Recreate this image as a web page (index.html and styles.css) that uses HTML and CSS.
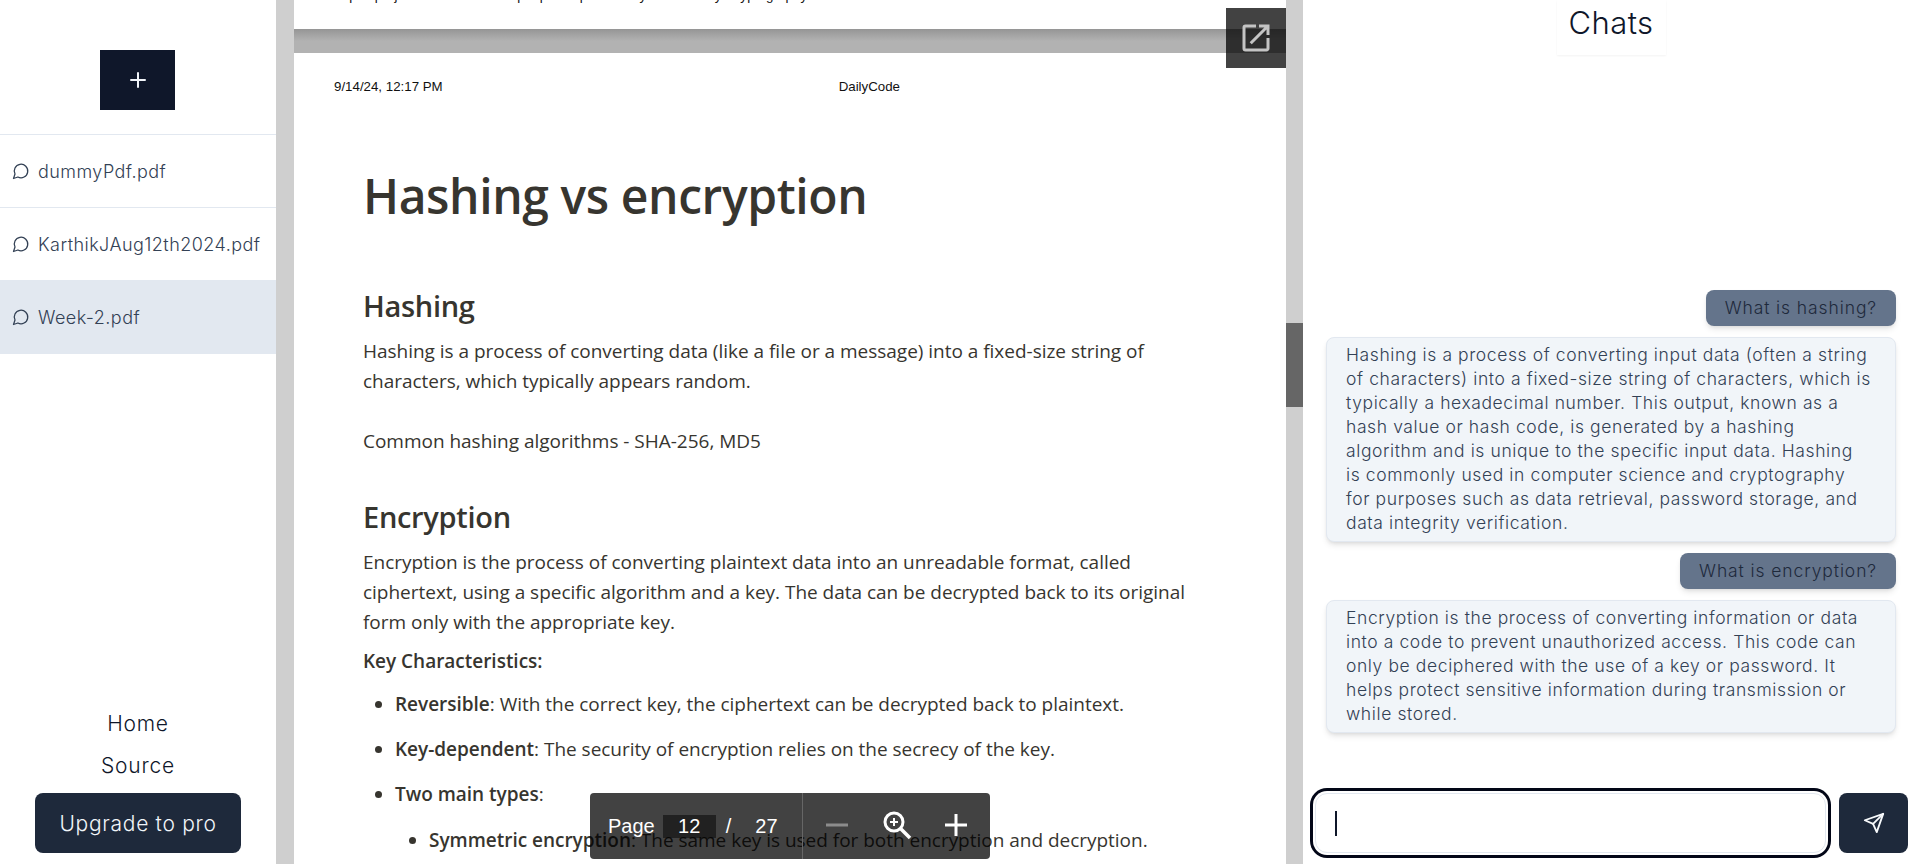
FILE: index.html
```html
<!DOCTYPE html>
<html lang="en">
<head>
    <meta charset="UTF-8">
    <meta name="viewport" content="width=device-width, initial-scale=1.0">
    <title>Chat with PDF</title>
    <link rel="stylesheet" href="styles.css">
</head>
<body>
    <div class="app">
        <aside class="sidebar">
            <div class="new-wrap">
                <button class="new-button">
                    <svg width="24" height="24" viewBox="0 0 24 24" fill="none" stroke="currentColor" stroke-width="2" stroke-linecap="round"><path d="M5 12h14"/><path d="M12 5v14"/></svg>
                </button>
            </div>
            <div class="file-list">
                <div class="file-item">
                    <svg class="file-icon" width="18" height="18" viewBox="0 0 24 24" fill="none" stroke="currentColor" stroke-width="1.7" stroke-linecap="round" stroke-linejoin="round"><path d="M7.9 20A9 9 0 1 0 4 16.1L2 22Z"/></svg>
                    <span>dummyPdf.pdf</span>
                </div>
                <div class="file-item">
                    <svg class="file-icon" width="18" height="18" viewBox="0 0 24 24" fill="none" stroke="currentColor" stroke-width="1.7" stroke-linecap="round" stroke-linejoin="round"><path d="M7.9 20A9 9 0 1 0 4 16.1L2 22Z"/></svg>
                    <span>KarthikJAug12th2024.pdf</span>
                </div>
                <div class="file-item active">
                    <svg class="file-icon" width="18" height="18" viewBox="0 0 24 24" fill="none" stroke="currentColor" stroke-width="1.7" stroke-linecap="round" stroke-linejoin="round"><path d="M7.9 20A9 9 0 1 0 4 16.1L2 22Z"/></svg>
                    <span>Week-2.pdf</span>
                </div>
            </div>
            <div class="side-footer">
                <a class="side-link">Home</a>
                <a class="side-link">Source</a>
                <button class="upgrade-button">Upgrade to pro</button>
            </div>
        </aside>

        <main class="viewer">
            <div class="pages">
                <div class="page-end">
                    <span>https://projects.100xdevs.com/pdf/public-private-keys/Public-Key-Cryptography-5</span>
                    <span class="page-no">11/27</span>
                </div>
                <div class="page-gap"></div>
                <div class="page">
                    <div class="print-head">
                        <span>9/14/24, 12:17 PM</span>
                        <span class="print-title">DailyCode</span>
                    </div>
                    <h1>Hashing vs encryption</h1>
                    <h2>Hashing</h2>
                    <p>Hashing is a process of converting data (like a file or a message) into a fixed-size string of<br>characters, which typically appears random.</p>
                    <p class="spaced">Common hashing algorithms - SHA-256, MD5</p>
                    <h2 class="second">Encryption</h2>
                    <p>Encryption is the process of converting plaintext data into an unreadable format, called<br>ciphertext, using a specific algorithm and a key. The data can be decrypted back to its original<br>form only with the appropriate key.</p>
                    <p class="key-title"><b>Key Characteristics:</b></p>
                    <ul>
                        <li><b>Reversible</b>: With the correct key, the ciphertext can be decrypted back to plaintext.</li>
                        <li><b>Key-dependent</b>: The security of encryption relies on the secrecy of the key.</li>
                        <li><b>Two main types</b>:
                            <ul>
                                <li><b>Symmetric encryption</b>: The same key is used for both encryption and decryption.</li>
                            </ul>
                        </li>
                    </ul>
                </div>
            </div>

            <button class="open-button">
                <svg width="36" height="36" viewBox="0 0 24 24" fill="currentColor"><path d="M19 19H5V5h7V3H5a2 2 0 0 0-2 2v14a2 2 0 0 0 2 2h14c1.1 0 2-.9 2-2v-7h-2v7zM14 3v2h3.59l-9.83 9.83 1.41 1.41L19 6.41V10h2V3h-7z"/></svg>
            </button>

            <div class="pdf-toolbar">
                <div class="pager">
                    <span class="pager-label">Page</span>
                    <span class="pager-input">12</span>
                    <span class="pager-slash">/</span>
                    <span class="pager-total">27</span>
                </div>
                <div class="zoomer">
                    <svg class="zoom-minus" width="28" height="28" viewBox="0 0 28 28" fill="none" stroke="currentColor" stroke-width="3"><path d="M3 14h22"/></svg>
                    <svg width="30" height="30" viewBox="0 0 30 30" fill="none" stroke="currentColor"><circle cx="12" cy="12" r="9" stroke-width="3"/><path d="M19 19l9 9" stroke-width="3.5"/><path d="M12 8v8M8 12h8" stroke-width="2"/></svg>
                    <svg width="28" height="28" viewBox="0 0 28 28" fill="none" stroke="currentColor" stroke-width="3"><path d="M3 14h22"/><path d="M14 3v22"/></svg>
                </div>
            </div>

            <div class="scrollbar"><div class="scroll-thumb"></div></div>
        </main>

        <section class="chat">
            <div class="chat-head"><h3>Chats</h3></div>
            <div class="messages">
                <div class="msg user">What is hashing?</div>
                <div class="msg bot">Hashing is a process of converting input data (often a string of characters) into a fixed-size string of characters, which is typically a hexadecimal number. This output, known as a hash value or hash code, is generated by a hashing algorithm and is unique to the specific input data. Hashing is&nbsp;commonly used in computer science and cryptography for&nbsp;purposes such as data retrieval, password storage, and data integrity verification.</div>
                <div class="msg user">What is encryption?</div>
                <div class="msg bot">Encryption is the process of converting information or data into a code to prevent unauthorized access. This code can only be deciphered with the use of a key or password. It helps protect sensitive information during transmission or while stored.</div>
            </div>
            <div class="chat-input-row">
                <div class="chat-input"><span class="caret"></span></div>
                <button class="send-button">
                    <svg width="22" height="22" viewBox="0 0 24 24" fill="none" stroke="currentColor" stroke-width="2" stroke-linecap="round" stroke-linejoin="round"><path d="m22 2-7 20-4-9-9-4Z"/><path d="M22 2 11 13"/></svg>
                </button>
            </div>
        </section>
    </div>
</body>
</html>
```

FILE: styles.css
```css
* {
    box-sizing: border-box;
}
html, body {
    height: 100%;
}
body {
    margin: 0;
    overflow: hidden;
    background-color: #ffffff;
    font-family: Inter, "Open Sans", sans-serif;
    color: #0f172a;
}
button {
    border: none;
    font-family: inherit;
    cursor: pointer;
}
.app {
    display: flex;
    height: 864px;
}

/* left column */
.sidebar {
    width: 276px;
    flex-shrink: 0;
    display: flex;
    flex-direction: column;
}
.new-wrap {
    height: 134px;
    padding-top: 50px;
    padding-right: 1px;
    display: flex;
    justify-content: center;
}
.new-button {
    width: 75px;
    height: 60px;
    display: flex;
    align-items: center;
    justify-content: center;
    background-color: #0f172a;
    color: #f1f5f9;
}
.file-item {
    height: 73px;
    display: flex;
    align-items: center;
    gap: 8px;
    padding-left: 12px;
    border-top: 1px solid #e2e8f0;
    font-size: 18px;
    font-weight: 300;
    letter-spacing: 0.45px;
    color: #334155;
    white-space: nowrap;
}
.file-item.active {
    height: 74px;
    background-color: #e2e8f0;
    border-top: none;
}
.file-icon {
    flex-shrink: 0;
}
.side-footer {
    margin-top: auto;
    padding-bottom: 11px;
    display: flex;
    flex-direction: column;
    align-items: center;
}
.side-link {
    font-size: 21px;
    line-height: 30px;
    margin-bottom: 12px;
    letter-spacing: 0.8px;
    font-weight: 300;
    color: #0f172a;
}
.upgrade-button {
    width: 206px;
    height: 60px;
    border-radius: 8px;
    background-color: #1e293b;
    color: #f1f5f9;
    font-size: 21px;
    font-weight: 300;
    letter-spacing: 0.7px;
}

/* pdf viewer */
.viewer {
    position: relative;
    width: 1027px;
    flex-shrink: 0;
    display: flex;
    background-color: #cfcfcf;
    padding-left: 18px;
    overflow: hidden;
}
.pages {
    flex: 1;
    min-width: 0;
    background-color: #ffffff;
}
.page-end {
    height: 40px;
    margin-top: -11px;
    padding: 0 40px;
    display: flex;
    justify-content: space-between;
    font-family: "Liberation Sans", Arial, sans-serif;
    font-size: 13.3px;
    line-height: 14px;
    letter-spacing: 0.12px;
    color: #111111;
}
.page-end .page-no {
    margin-right: -4px;
}
.page-gap {
    height: 24px;
    background: linear-gradient(#959595, #b2b2b2 50%);
}
.page {
    padding: 0 69px;
    color: #37352f;
    font-family: "Open Sans", sans-serif;
    font-size: 19px;
    line-height: 30px;
    letter-spacing: -0.02px;
}
.print-head {
    margin-left: -29px;
    padding-top: 26px;
    height: 56px;
    font-family: "Liberation Sans", Arial, sans-serif;
    font-size: 13.3px;
    line-height: 16px;
    letter-spacing: 0;
    color: #111111;
    display: flex;
}
.print-title {
    margin-left: 396px;
}
h1 {
    margin: 57px 0 0;
    font-size: 48px;
    line-height: 60px;
    font-weight: 600;
    letter-spacing: -0.4px;
}
h2 {
    margin: 61px 0 0;
    font-size: 29px;
    line-height: 38px;
    font-weight: 600;
    letter-spacing: -0.3px;
}
.page h2.second {
    margin-top: 42px;
}
.page p {
    margin: 11px 0 0;
}
.page p.spaced {
    margin-top: 30px;
}
.page p.key-title {
    margin-top: 9px;
}
.page b {
    font-weight: 600;
}
ul {
    margin: 13px 0 0;
    padding-left: 32px;
}
li {
    margin-bottom: 15px;
}
li ul {
    margin-top: 16px;
    padding-left: 34px;
    list-style-type: disc;
}

/* overlays on the viewer */
.open-button {
    position: absolute;
    top: 8px;
    right: 17px;
    width: 60px;
    height: 60px;
    padding: 0;
    display: flex;
    align-items: center;
    justify-content: center;
    background-color: rgba(0, 0, 0, 0.74);
    color: #c4c4c4;
}
.pdf-toolbar {
    position: absolute;
    left: 314px;
    top: 793px;
    width: 400px;
    height: 66px;
    display: flex;
    border-radius: 4px;
    background-color: rgba(0, 0, 0, 0.74);
    color: #ffffff;
    font-family: "Liberation Sans", Arial, sans-serif;
    font-size: 20px;
}
.pager {
    width: 213px;
    padding-left: 18px;
    display: flex;
    align-items: center;
    border-right: 1px solid #666666;
}
.pager-input {
    width: 53px;
    height: 23px;
    margin-left: 8px;
    line-height: 23px;
    text-align: center;
    background-color: rgba(0, 0, 0, 0.5);
}
.pager-slash {
    margin-left: 10px;
}
.pager-total {
    margin-left: 24px;
}
.zoomer {
    flex: 1;
    display: flex;
    align-items: center;
    justify-content: space-between;
    padding: 0 20px 2px 20px;
}
.zoom-minus {
    color: #8c8c8c;
}
.scrollbar {
    width: 17px;
    flex-shrink: 0;
    padding-top: 323px;
}
.scroll-thumb {
    height: 84px;
    background-color: #666666;
}

/* chat */
.chat {
    flex: 1;
    min-width: 0;
    display: flex;
    flex-direction: column;
}
.chat-head {
    display: flex;
    justify-content: center;
}
h3 {
    margin: 0;
    width: 109px;
    height: 55px;
    font-size: 31px;
    font-weight: 300;
    line-height: 46px;
    letter-spacing: 0.4px;
    text-align: center;
    color: #0f172a;
    box-shadow: 0 1px 2px rgba(0, 0, 0, 0.05);
}
.messages {
    flex: 1;
    display: flex;
    flex-direction: column;
    justify-content: flex-end;
    align-items: flex-end;
    gap: 11px;
    padding: 0 23px 60px 23px;
}
.msg {
    border-radius: 8px;
    font-size: 17.5px;
    font-weight: 300;
    line-height: 24px;
    letter-spacing: 0.6px;
    box-shadow: 0 4px 6px -1px rgba(0, 0, 0, 0.1), 0 2px 4px -2px rgba(0, 0, 0, 0.1);
}
.msg.user {
    height: 36px;
    padding: 6px 19px;
    letter-spacing: 0.9px;
    background-color: #64748b;
    color: #1e293b;
}
.msg.bot {
    width: 100%;
    padding: 5px 19px 6px 19px;
    background-color: #f1f5f9;
    border: 1px solid #e2e8f0;
    color: #334155;
}
.chat-input-row {
    display: flex;
    gap: 13px;
    padding: 0 11px 11px 12px;
}
.chat-input {
    flex: 1;
    height: 60px;
    display: flex;
    align-items: center;
    padding-left: 19px;
    background-color: #ffffff;
    border: 1px solid #e2e8f0;
    border-radius: 12px;
    box-shadow: 0 0 0 2px #ffffff, 0 0 0 5px #020617;
}
.caret {
    width: 2px;
    height: 25px;
    background-color: #0f172a;
}
.send-button {
    width: 69px;
    height: 60px;
    padding: 0;
    display: flex;
    align-items: center;
    justify-content: center;
    border-radius: 8px;
    background-color: #1e293b;
    color: #f8fafc;
}
```
